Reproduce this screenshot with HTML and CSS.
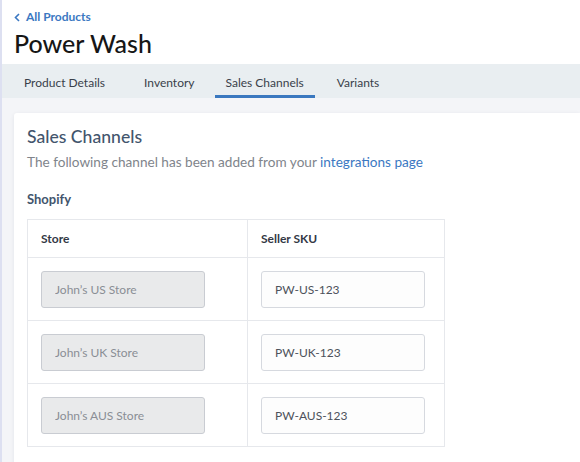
FILE: index.html
```html
<!DOCTYPE html>
<html lang="en">
<head>
    <meta charset="UTF-8">
    <meta name="viewport" content="width=device-width, initial-scale=1.0">
    <title>Power Wash - Sales Channels</title>
    <link rel="stylesheet" href="styles.css">
</head>
<body>
    <div class="page">
        <header class="product-header">
            <a class="back-link" href="#">
                <svg width="6" height="9" viewBox="0 0 6 9"><path d="M5 1 L1.5 4.5 L5 8" fill="none" stroke="#3b78c2" stroke-width="1.6"/></svg>
                All Products
            </a>
            <h1>Power Wash</h1>
        </header>

        <nav class="tabs">
            <a class="tab" href="#">Product Details</a>
            <a class="tab" href="#">Inventory</a>
            <a class="tab active" href="#">Sales Channels</a>
            <a class="tab" href="#">Variants</a>
        </nav>

        <main class="content">
            <section class="card">
                <h2>Sales Channels</h2>
                <p class="intro">The following channel has been added from your <a href="#">integrations page</a></p>

                <h3>Shopify</h3>
                <table class="channel-table">
                    <thead>
                        <tr>
                            <th class="col-store">Store</th>
                            <th>Seller SKU</th>
                        </tr>
                    </thead>
                    <tbody>
                        <tr>
                            <td><input type="text" class="store-input" value="John’s US Store" disabled></td>
                            <td><input type="text" class="sku-input" value="PW-US-123"></td>
                        </tr>
                        <tr>
                            <td><input type="text" class="store-input" value="John’s UK Store" disabled></td>
                            <td><input type="text" class="sku-input" value="PW-UK-123"></td>
                        </tr>
                        <tr>
                            <td><input type="text" class="store-input" value="John’s AUS Store" disabled></td>
                            <td><input type="text" class="sku-input" value="PW-AUS-123"></td>
                        </tr>
                    </tbody>
                </table>
            </section>
        </main>
    </div>
</body>
</html>
```

FILE: styles.css
```css
/* Base */
html, body {
    margin: 0;
    padding: 0;
    font-family: Lato, "Open Sans", sans-serif;
    background-color: #f4f5f8;
}

.page {
    min-height: 462px;
    border-left: 2px solid #dde0f1;
    overflow: hidden;
}

/* Header */
.product-header {
    background-color: #ffffff;
    height: 64px;
    padding: 10px 12px 0;
    box-sizing: border-box;
}

.back-link {
    display: flex;
    align-items: center;
    gap: 6px;
    font-size: 12px;
    font-weight: bold;
    color: #3b78c2;
    text-decoration: none;
    line-height: 14px;
}

.product-header h1 {
    margin: 4px 0 0;
    font-size: 25px;
    font-weight: 500;
    color: #161616;
    line-height: 30px;
}

/* Tabs */
.tabs {
    display: flex;
    height: 34px;
    padding-left: 11px;
    background-color: #e9eef1;
}

.tab {
    display: flex;
    align-items: center;
    padding: 5px 11px 0;
    margin-right: 9px;
    font-size: 12px;
    color: #3a3f4a;
    text-decoration: none;
    border-bottom: 3px solid transparent;
}

.tab:first-child {
    margin-right: 17px;
}

.tab.active {
    margin-right: 11px;
    border-bottom-color: #3a78bf;
}

/* Card */
.content {
    padding: 15px 0 0 12px;
}

.card {
    background-color: #ffffff;
    padding: 14px 14px 20px 13px;
    box-shadow: 0 1px 4px rgba(30, 40, 70, 0.08);
    border-radius: 3px 0 0 0;
}

.card h2 {
    margin: 0;
    font-size: 17.6px;
    font-weight: 500;
    color: #43556d;
    line-height: 20px;
}

.intro {
    margin: 7px 0 0;
    font-size: 13.6px;
    color: #80848b;
    line-height: 16px;
}

.intro a {
    color: #3b78c2;
    text-decoration: none;
}

.card h3 {
    margin: 21px 0 0;
    font-size: 13px;
    font-weight: bold;
    color: #43556d;
    line-height: 16px;
}

/* Table */
.channel-table {
    margin-top: 12px;
    width: 418px;
    border-collapse: collapse;
    border: 1px solid #e6e8ec;
}

.channel-table th {
    height: 37px;
    text-align: left;
    padding: 0 13px;
    font-size: 12px;
    font-weight: bold;
    color: #343946;
    border: 1px solid #e6e8ec;
}

.channel-table .col-store {
    width: 193px;
}

.channel-table td {
    height: 62px;
    padding: 0 13px;
    border: 1px solid #e6e8ec;
}

.store-input,
.sku-input {
    width: 164px;
    height: 37px;
    box-sizing: border-box;
    padding: 0 13px;
    font-family: Lato, "Open Sans", sans-serif;
    font-size: 12px;
    border-radius: 3px;
    outline: none;
}

.store-input {
    background-color: #e9eaeb;
    border: 1px solid #c9ccd2;
    color: #8a8e95;
}

.sku-input {
    background-color: #fdfdfd;
    border: 1px solid #d6d9df;
    color: #4d525b;
}
```
